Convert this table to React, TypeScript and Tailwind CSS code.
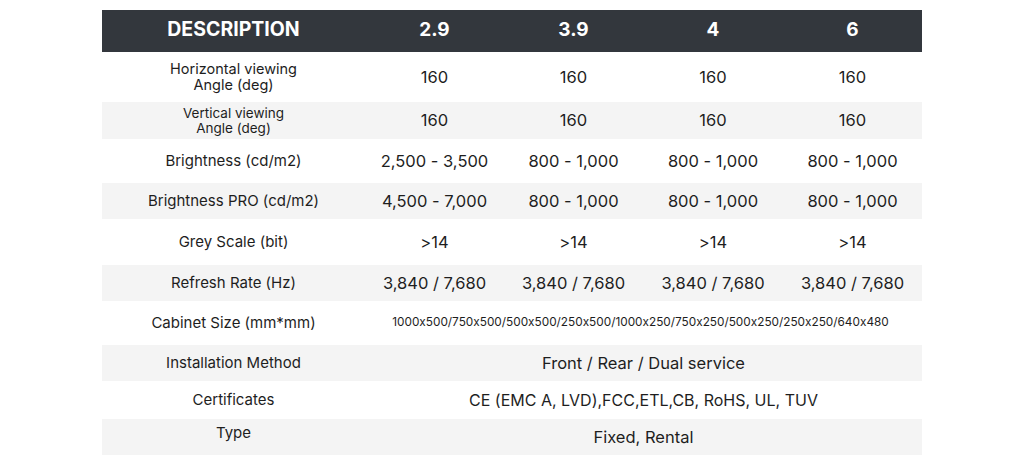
const cols = ["2.9", "3.9", "4", "6"];

type Row = {
  label: string[];
  labelSize: string;
  values?: string[];
  span?: string;
  spanSize?: string;
  h: string;
  gray?: boolean;
};

const rows: Row[] = [
  { label: ["Horizontal viewing", "Angle (deg)"], labelSize: "text-[14.5px] leading-[16px]", values: ["160", "160", "160", "160"], h: "h-[50px]" },
  { label: ["Vertical viewing", "Angle (deg)"], labelSize: "text-[13.5px] leading-[15px]", values: ["160", "160", "160", "160"], h: "h-[37px]", gray: true },
  { label: ["Brightness (cd/m2)"], labelSize: "text-[15px]", values: ["2,500 - 3,500", "800 - 1,000", "800 - 1,000", "800 - 1,000"], h: "h-[44px]" },
  { label: ["Brightness PRO (cd/m2)"], labelSize: "text-[15px]", values: ["4,500 - 7,000", "800 - 1,000", "800 - 1,000", "800 - 1,000"], h: "h-[36px]", gray: true },
  { label: ["Grey Scale (bit)"], labelSize: "text-[15px]", values: [">14", ">14", ">14", ">14"], h: "h-[46px]" },
  { label: ["Refresh Rate (Hz)"], labelSize: "text-[15px]", values: ["3,840 / 7,680", "3,840 / 7,680", "3,840 / 7,680", "3,840 / 7,680"], h: "h-[36px]", gray: true },
  { label: ["Cabinet Size (mm*mm)"], labelSize: "text-[15px]", span: "1000x500/750x500/500x500/250x500/1000x250/750x250/500x250/250x250/640x480", spanSize: "text-[11.8px] pr-[6px]", h: "h-[44px]" },
  { label: ["Installation Method"], labelSize: "text-[15px]", span: "Front / Rear / Dual service", spanSize: "text-[16.5px]", h: "h-[36px]", gray: true },
  { label: ["Certificates"], labelSize: "text-[15px]", span: "CE (EMC A, LVD),FCC,ETL,CB, RoHS, UL, TUV", spanSize: "text-[16px]", h: "h-[38px]" },
  { label: ["Type"], labelSize: "text-[15px] pb-[8px]", span: "Fixed, Rental", spanSize: "text-[16.5px]", h: "h-[36px]", gray: true },
];

export default function App() {
  return (
    <div className="h-[465px] w-[1024px] bg-white pt-[10px] font-['Inter',sans-serif] text-[#1e1e1e] [font-feature-settings:'calt'_0]">
      <table className="ml-[102px] w-[820px] table-fixed border-collapse">
        <colgroup>
          <col className="w-[263px]" />
          <col className="w-[139px]" />
          <col className="w-[139px]" />
          <col className="w-[140px]" />
          <col className="w-[139px]" />
        </colgroup>
        <thead>
          <tr className="h-[42px] bg-[#33373d] text-white">
            <th className="pb-[2px] text-center text-[19.5px] font-bold">DESCRIPTION</th>
            {cols.map((c) => (
              <th key={c} className="pb-[2px] text-center text-[19px] font-bold">
                {c}
              </th>
            ))}
          </tr>
        </thead>
        <tbody>
          {rows.map((r, i) => (
            <tr key={i} className={`${r.h} ${r.gray ? "bg-[#f4f4f4]" : "bg-white"}`}>
              <td className={`text-center font-normal ${r.labelSize}`}>
                {r.label.map((l) => (
                  <div key={l}>{l}</div>
                ))}
              </td>
              {r.values ? (
                r.values.map((v, j) => (
                  <td key={j} className="text-center text-[16.5px] font-normal">
                    {v}
                  </td>
                ))
              ) : (
                <td colSpan={4} className={`text-center font-normal ${r.spanSize}`}>
                  {r.span}
                </td>
              )}
            </tr>
          ))}
        </tbody>
      </table>
    </div>
  );
}
